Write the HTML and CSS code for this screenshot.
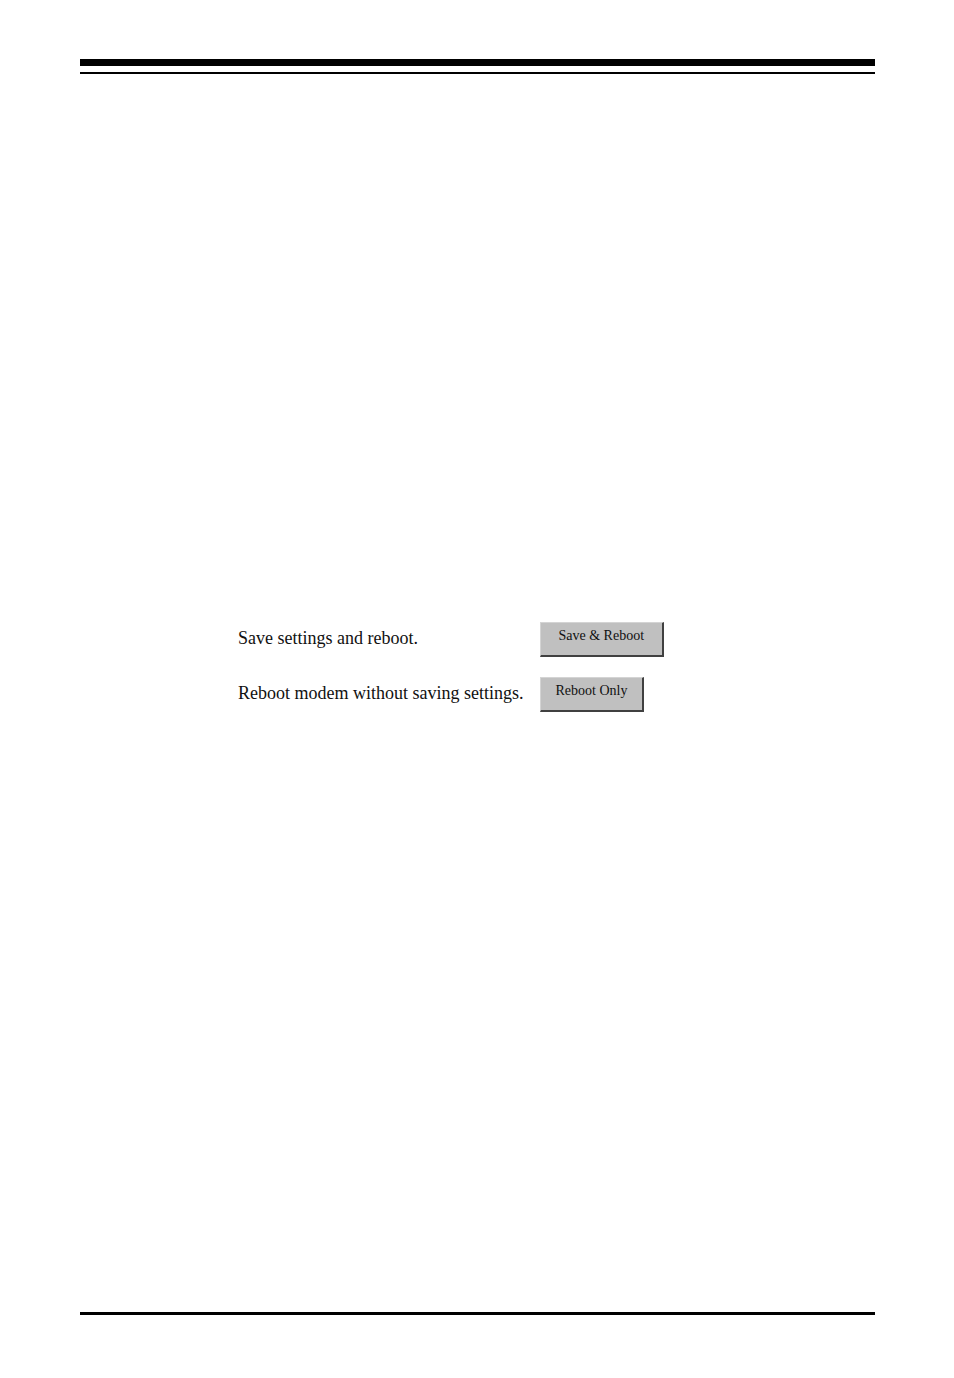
FILE: index.html
```html
<!DOCTYPE html>
<html lang="en">
<head>
<meta charset="utf-8">
<meta name="viewport" content="width=device-width, initial-scale=1">
<title>Save and reboot</title>
<link rel="stylesheet" href="styles.css">
</head>
<body class="page">
<header class="page-header"></header>
<main class="content">
<form class="actions">
<span class="label" id="save-label">Save settings and reboot.</span>
<button class="button button-wide" type="button" aria-describedby="save-label">Save &amp; Reboot</button>
<span class="label" id="reboot-label">Reboot modem without saving settings.</span>
<button class="button" type="button" aria-describedby="reboot-label">Reboot Only</button>
</form>
</main>
<footer class="page-footer"></footer>
</body>
</html>
```
FILE: styles.css
```css
* {
  box-sizing: border-box;
}

.page {
  display: flex;
  flex-direction: column;
  min-height: 100vh;
  margin: 0;
  padding: 59px 79px 63px 80px;
  background: #fff;
  color: #111;
  font-family: "Liberation Serif", "Times New Roman", serif;
}

.page-header {
  height: 15px;
  border-top: 7px solid #000;
  border-bottom: 2px solid #000;
}

.content {
  flex: 1;
  padding: 548px 0 0 158px;
}

.actions {
  display: grid;
  grid-template-columns: max-content max-content;
  column-gap: 16px;
  row-gap: 20px;
}

.label {
  font-size: 18px;
  line-height: 32px;
}

.button {
  justify-self: start;
  height: 35px;
  padding: 0 15px 6px;
  border: solid;
  border-width: 1px 2px 2px 1px;
  border-color: #d4d4d4 #404040 #404040 #d4d4d4;
  border-radius: 0;
  background: #c0c0c0;
  color: #111;
  font-family: inherit;
  font-size: 14px;
  line-height: 24px;
}

.button-wide {
  padding-right: 18px;
  padding-left: 18px;
}

.page-footer {
  border-top: 3px solid #000;
}
```
